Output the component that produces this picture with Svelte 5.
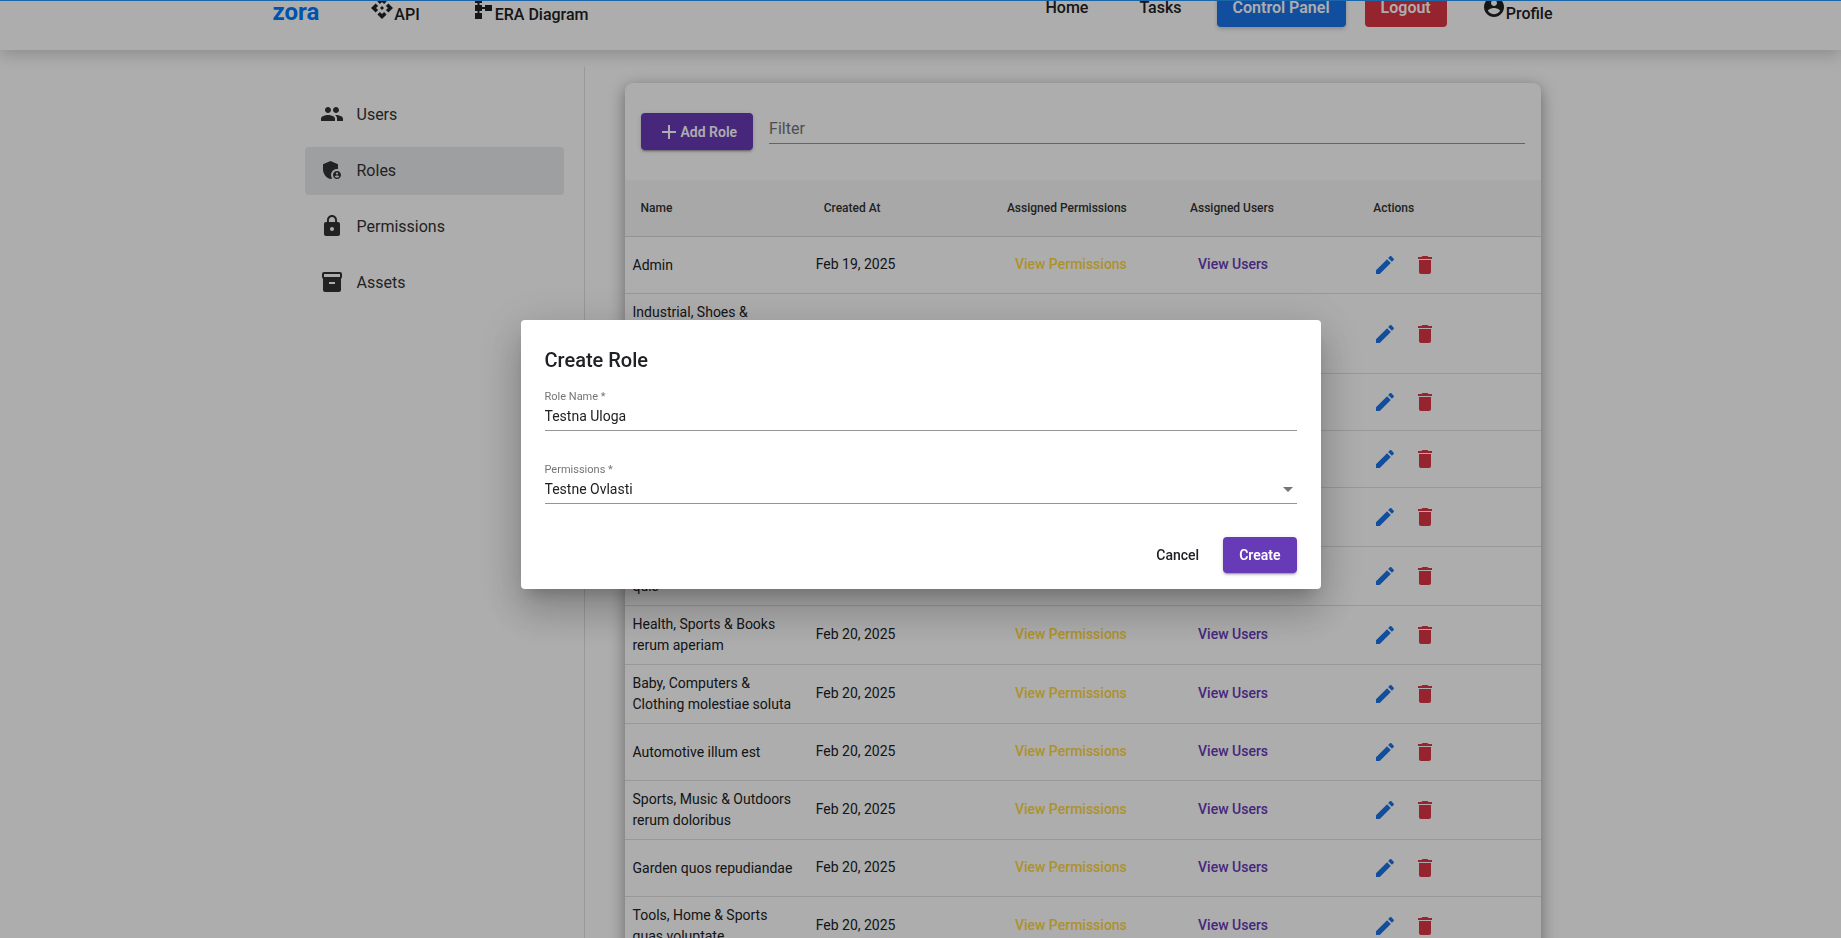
<script>
  const icons = {
    api: 'M14 12l-2 2-2-2 2-2 2 2zM12 6l2.12 2.12 2.5-2.5L12 1 7.38 5.62l2.5 2.5L12 6zM6 12l2.12-2.12-2.5-2.5L1 12l4.62 4.62 2.5-2.5L6 12zM18 12l-2.12 2.12 2.5 2.5L23 12l-4.62-4.62-2.5 2.5L18 12zM12 18l-2.12-2.12-2.5 2.5L12 23l4.62-4.62-2.5-2.5L12 18z',
    schema: 'M14 9v2h-3V9H8.5V7H11V1H4v6h2.5v2H4v6h2.5v2H4v6h7v-6H8.5v-2H11v-2h3v2h7V9z',
    account: 'M12 2C6.48 2 2 6.48 2 12s4.48 10 10 10 10-4.48 10-10S17.52 2 12 2zm0 3c1.66 0 3 1.34 3 3s-1.34 3-3 3-3-1.34-3-3 1.34-3 3-3zm0 14.2c-2.5 0-4.71-1.28-6-3.22.03-1.99 4-3.08 6-3.08 1.99 0 5.97 1.09 6 3.08-1.29 1.94-3.5 3.22-6 3.22z',
    users: 'M16 11c1.66 0 2.99-1.34 2.99-3S17.66 5 16 5s-3 1.34-3 3 1.34 3 3 3zm-8 0c1.66 0 2.99-1.34 2.99-3S9.66 5 8 5 5 6.34 5 8s1.34 3 3 3zm0 2c-2.33 0-7 1.17-7 3.5V19h14v-2.5c0-2.33-4.67-3.5-7-3.5zm8 0c-.29 0-.62.02-.97.05 1.16.84 1.97 1.97 1.97 3.45V19h6v-2.5c0-2.33-4.67-3.5-7-3.5z',
    roles: 'M17 11c.34 0 .67.04 1 .09V6.27L10.5 3 3 6.27v4.91c0 4.54 3.2 8.79 7.5 9.82.55-.13 1.08-.32 1.6-.55-.69-.98-1.1-2.17-1.1-3.45 0-3.31 2.69-6 6-6zM17 13c-2.21 0-4 1.79-4 4s1.79 4 4 4 4-1.79 4-4-1.79-4-4-4zm0 1.38c.62 0 1.12.51 1.12 1.12s-.51 1.12-1.12 1.12-1.12-.51-1.12-1.12.5-1.12 1.12-1.12zm0 5.37c-.93 0-1.74-.46-2.24-1.17.05-.72 1.51-1.08 2.24-1.08s2.19.36 2.24 1.08c-.5.71-1.31 1.17-2.24 1.17z',
    lock: 'M18 8h-1V6c0-2.76-2.24-5-5-5S7 3.24 7 6v2H6c-1.1 0-2 .9-2 2v10c0 1.1.9 2 2 2h12c1.1 0 2-.9 2-2V10c0-1.1-.9-2-2-2zm-6 9c-1.1 0-2-.9-2-2s.9-2 2-2 2 .9 2 2-.9 2-2 2zm3.1-9H8.9V6c0-1.71 1.39-3.1 3.1-3.1s3.1 1.39 3.1 3.1v2z',
    assets: 'M20 2H4c-1 0-2 .9-2 2v3.01c0 .72.43 1.34 1 1.69V20c0 1.1 1.1 2 2 2h14c.9 0 2-.9 2-2V8.7c.57-.35 1-.97 1-1.69V4c0-1.1-1-2-2-2zm-5 12H9v-2h6v2zm5-7H4V4h16v3z',
    add: 'M19 13h-6v6h-2v-6H5v-2h6V5h2v6h6v2z',
    edit: 'M3 17.25V21h3.75L17.81 9.94l-3.75-3.75L3 17.25zM20.71 7.04c.39-.39.39-1.02 0-1.41l-2.34-2.34c-.39-.39-1.02-.39-1.41 0l-1.83 1.83 3.75 3.75 1.83-1.83z',
    trash: 'M6 19c0 1.1.9 2 2 2h8c1.1 0 2-.9 2-2V7H6v12zM19 4h-3.5l-1-1h-5l-1 1H5v2h14V4z'
  };

  const sections = [
    { label: 'Users', icon: 'users' },
    { label: 'Roles', icon: 'roles', active: true },
    { label: 'Permissions', icon: 'lock' },
    { label: 'Assets', icon: 'assets' }
  ];

  const columns = ['Name', 'Created At', 'Assigned Permissions', 'Assigned Users', 'Actions'];

  const roles = [
    { name: 'Admin', created: 'Feb 19, 2025' },
    { name: 'Industrial, Shoes & Electronics consequatur voluptas', created: 'Feb 20, 2025' },
    { name: 'Toys et natus', created: 'Feb 20, 2025' },
    { name: 'Grocery quia', created: 'Feb 20, 2025' },
    { name: 'Games, Music & Home dolores', created: 'Feb 20, 2025' },
    { name: 'Outdoors & Electronics quis', created: 'Feb 20, 2025' },
    { name: 'Health, Sports & Books rerum aperiam', created: 'Feb 20, 2025' },
    { name: 'Baby, Computers & Clothing molestiae soluta', created: 'Feb 20, 2025' },
    { name: 'Automotive illum est', created: 'Feb 20, 2025' },
    { name: 'Sports, Music & Outdoors rerum doloribus', created: 'Feb 20, 2025' },
    { name: 'Garden quos repudiandae', created: 'Feb 20, 2025' },
    { name: 'Tools, Home & Sports quas voluptate', created: 'Feb 20, 2025' }
  ];

  let filter = $state('');
  let roleName = $state('Testna Uloga');
  let permission = $state('Testne Ovlasti');
</script>

{#snippet icon(name)}
  <svg class="icon" viewBox="0 0 24 24" width="24" height="24" fill="currentColor" aria-hidden="true">
    <path d={icons[name]} />
  </svg>
{/snippet}

<div class="page">
  <header class="topbar">
    <div class="topbar-inner">
      <nav class="nav-group nav-left" aria-label="Documentation">
        <a class="brand" href="#home">zora</a>
        <a class="nav-link" href="#api">{@render icon('api')}API</a>
        <a class="nav-link" href="#era">{@render icon('schema')}ERA Diagram</a>
      </nav>
      <nav class="nav-group nav-right" aria-label="Main">
        <a class="nav-link" href="#home">Home</a>
        <a class="nav-link" href="#tasks">Tasks</a>
        <a class="nav-link nav-button primary" href="#control">Control Panel</a>
        <button class="nav-link nav-button danger" type="button">Logout</button>
        <a class="nav-link profile" href="#profile">{@render icon('account')}Profile</a>
      </nav>
    </div>
  </header>

  <div class="content">
    <aside class="sidebar">
      {#each sections as s}
        <a class="side-link" class:active={s.active} href="#{s.label.toLowerCase()}">
          {@render icon(s.icon)}
          <span>{s.label}</span>
        </a>
      {/each}
    </aside>

    <main class="card">
      <div class="toolbar">
        <button class="button raised add" type="button">{@render icon('add')}Add Role</button>
        <input class="filter" type="text" placeholder="Filter" aria-label="Filter" bind:value={filter} />
      </div>
      <table>
        <thead>
          <tr>
            {#each columns as c}<th scope="col">{c}</th>{/each}
          </tr>
        </thead>
        <tbody>
          {#each roles as r}
            <tr>
              <td>{r.name}</td>
              <td class="raised-line">{r.created}</td>
              <td class="raised-line"><button class="button view-permissions" type="button">View Permissions</button></td>
              <td class="raised-line"><button class="button view-users" type="button">View Users</button></td>
              <td>
                <div class="actions">
                  <button class="icon-button edit" type="button" aria-label="Edit">{@render icon('edit')}</button>
                  <button class="icon-button delete" type="button" aria-label="Delete">{@render icon('trash')}</button>
                </div>
              </td>
            </tr>
          {/each}
        </tbody>
      </table>
    </main>
  </div>
</div>

<div class="backdrop">
  <form class="dialog" role="dialog" aria-modal="true" aria-labelledby="dialog-title">
    <h2 id="dialog-title">Create Role</h2>
    <div class="field">
      <label for="role-name">Role Name *</label>
      <input id="role-name" type="text" required bind:value={roleName} />
    </div>
    <div class="field">
      <label for="role-permissions">Permissions *</label>
      <div class="select-box">
        <select id="role-permissions" required bind:value={permission}>
          <option>Testne Ovlasti</option>
        </select>
        <svg class="arrow" viewBox="0 0 10 5" width="10" height="5" aria-hidden="true"><path d="M0 0h10L5 5z" fill="#757575" /></svg>
      </div>
    </div>
    <div class="dialog-actions">
      <button class="button" type="button">Cancel</button>
      <button class="button raised" type="button">Create</button>
    </div>
  </form>
</div>
<div class="progress"></div>

<style>
  :global(body) {
    background: #fff;
    color: #202124;
    font-family: Roboto, 'Liberation Sans', sans-serif;
  }

  .page,
  .page *,
  .backdrop,
  .backdrop * {
    box-sizing: border-box;
  }

  .page {
    height: 100vh;
    overflow: hidden;
    display: flex;
    flex-direction: column;
  }

  a {
    color: inherit;
    text-decoration: none;
  }

  button,
  input,
  select {
    font-family: inherit;
  }

  button {
    border: 0;
    background: none;
    cursor: pointer;
  }

  .icon {
    flex: none;
  }

  /* Top bar, scrolled partly out of view */
  .topbar {
    flex: none;
    height: 86px;
    margin-top: -36px;
    background: #fff;
    box-shadow: 0 4px 16px rgba(0, 0, 0, 0.2);
  }

  .topbar-inner {
    max-width: 1320px;
    height: 100%;
    margin: 0 auto;
    padding: 0 12px;
    box-sizing: border-box;
    display: flex;
    justify-content: space-between;
    align-items: center;
  }

  .nav-group {
    display: flex;
    align-items: baseline;
    gap: 19px;
  }

  .nav-left {
    padding-top: 6px;
  }

  .brand {
    padding-right: 16px;
    font-size: 24px;
    font-weight: 700;
    color: #007bff;
  }

  .nav-link {
    padding: 9px 16px 7px;
    font-size: 16px;
    line-height: 24px;
    font-weight: 500;
  }

  .nav-right {
    align-items: center;
  }

  .nav-button {
    color: #fff;
    font-weight: 600;
    border-radius: 4px;
  }

  .primary {
    background: #1a73e8;
    box-shadow: 0 2px 4px rgba(0, 0, 0, 0.2);
  }

  .danger {
    background: #dc3545;
  }

  .profile {
    padding-top: 14px;
  }

  .content {
    flex: 1;
    width: 100%;
    max-width: 1280px;
    margin: 0 auto;
    padding: 17px 20px 0 0;
    display: flex;
    gap: 40px;
  }

  .sidebar {
    flex: none;
    width: 304px;
    padding: 24px 20px 0 24px;
    border-right: 1px solid rgba(0, 0, 0, 0.12);
    display: flex;
    flex-direction: column;
    gap: 8px;
  }

  .side-link {
    height: 48px;
    padding: 0 15px 2px;
    border-radius: 4px;
    display: flex;
    align-items: center;
    gap: 13px;
    font-size: 16px;
    color: #333;
  }

  .active {
    background: #e8eaed;
  }

  .card {
    flex: 1;
    min-width: 0;
    align-self: flex-start;
    margin-top: 16px;
    background: #fff;
    border-radius: 8px;
    box-shadow: 0 4px 16px rgba(0, 0, 0, 0.4);
  }

  .toolbar {
    display: flex;
    align-items: flex-start;
    gap: 16px;
    padding: 30px 16px;
  }

  .button {
    height: 36px;
    padding: 0 16px;
    border-radius: 4px;
    font-size: 14px;
    font-weight: 500;
    color: #202124;
  }

  .raised {
    background: #673ab7;
    color: #fff;
    font-weight: 600;
    box-shadow:
      0 3px 1px -2px rgba(0, 0, 0, 0.2),
      0 2px 2px rgba(0, 0, 0, 0.14),
      0 1px 5px rgba(0, 0, 0, 0.12);
  }

  .add {
    height: 37px;
    display: flex;
    align-items: center;
  }

  .filter {
    flex: 1;
    min-width: 0;
    height: 31px;
    padding: 1px 0 0;
    border: 0;
    border-bottom: 1px solid #949494;
    background: none;
    font-size: 16px;
    outline: none;
  }

  .filter::placeholder {
    color: #757575;
  }

  table {
    width: 100%;
    table-layout: fixed;
    border-collapse: separate;
    border-spacing: 0;
  }

  th {
    height: 57px;
    padding: 0 16px;
    background: #f8f8f8;
    border-bottom: 1px solid rgba(0, 0, 0, 0.12);
    font-size: 12px;
    font-weight: 500;
    text-align: left;
    white-space: nowrap;
    color: #333;
  }

  td {
    padding: 8px;
    border-bottom: 1px solid rgba(0, 0, 0, 0.12);
    font-size: 14px;
    line-height: 21px;
    vertical-align: middle;
  }

  .raised-line {
    padding: 7px 8px 9px;
  }

  td .button {
    display: block;
    white-space: nowrap;
  }

  .view-permissions {
    color: #ffd740;
  }

  .view-users {
    color: #673ab7;
  }

  .actions {
    display: flex;
  }

  .icon-button {
    width: 40px;
    height: 40px;
    padding: 8px;
    line-height: 0;
  }

  .edit {
    color: #1a73e8;
  }

  .delete {
    color: #dc3545;
  }

  .backdrop {
    position: fixed;
    inset: 0;
    padding-bottom: 29px;
    background: rgba(0, 0, 0, 0.32);
    display: flex;
    align-items: center;
    justify-content: center;
  }

  .dialog {
    width: 800px;
    max-width: 90vw;
    padding: 24px 24px 16px;
    background: #fff;
    border-radius: 4px;
    box-shadow:
      0 11px 15px -7px rgba(0, 0, 0, 0.2),
      0 24px 38px 3px rgba(0, 0, 0, 0.14),
      0 9px 46px 8px rgba(0, 0, 0, 0.12);
  }

  h2 {
    margin: 0 0 12px;
    font-size: 20px;
    line-height: 32px;
    font-weight: 500;
  }

  .field {
    margin-bottom: 30px;
  }

  .field label {
    display: block;
    height: 16px;
    font-size: 11px;
    line-height: 18px;
    color: #757575;
  }

  .field input,
  .field select {
    display: block;
    width: 100%;
    height: 27px;
    padding: 0 0 2px;
    border: 0;
    border-bottom: 1px solid #949494;
    border-radius: 0;
    background: none;
    font-size: 14px;
    color: #202124;
    outline: none;
    appearance: none;
  }

  .select-box {
    position: relative;
  }

  .arrow {
    position: absolute;
    right: 4px;
    top: 10px;
    pointer-events: none;
  }

  .dialog-actions {
    display: flex;
    justify-content: flex-end;
    gap: 8px;
    padding-top: 3px;
  }

  .progress {
    position: fixed;
    inset: 0 0 auto;
    height: 1px;
    background: #1b66a8;
  }
</style>
